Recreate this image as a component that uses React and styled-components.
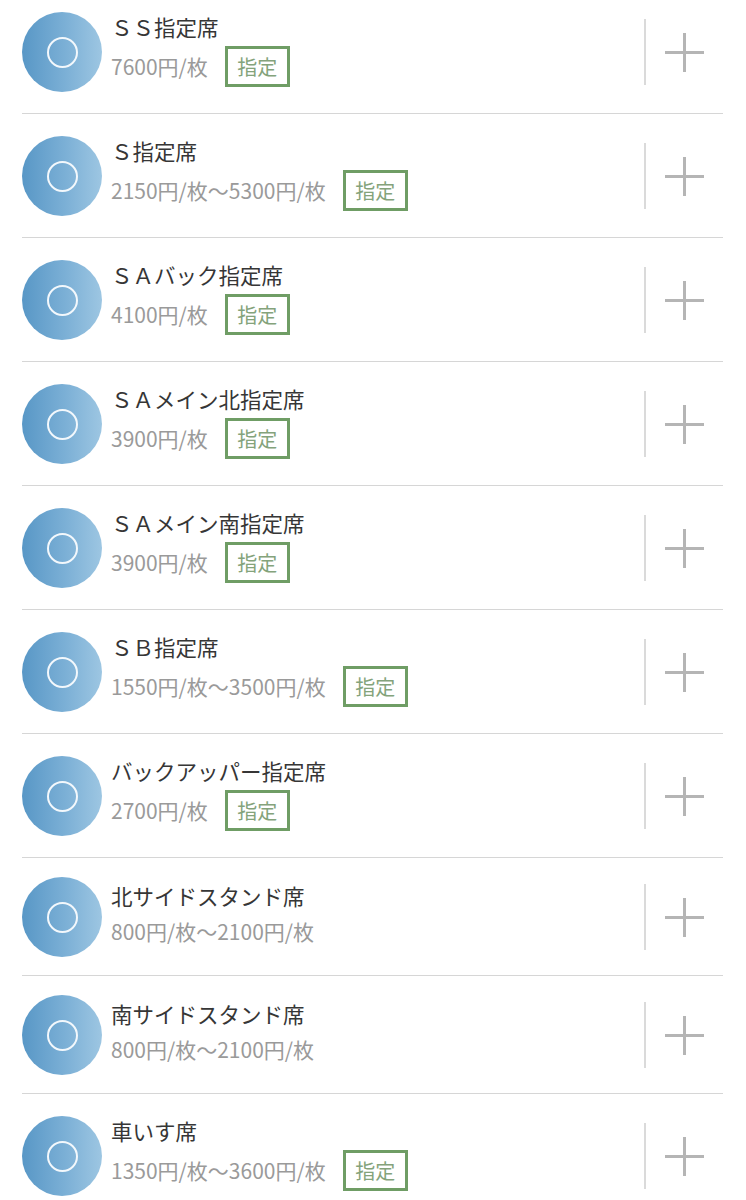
import React from "react";
import styled, { createGlobalStyle } from "styled-components";

const GlobalStyle = createGlobalStyle`
  html, body {
    margin: 0;
    padding: 0;
    background: #ffffff;
  }
  body {
    font-family: "Noto Sans CJK JP", "Noto Sans", sans-serif;
    overflow: hidden;
  }
`;

const Page = styled.div`
  width: 746px;
  height: 1200px;
  overflow: hidden;
  background: #fff;
`;

const List = styled.ul`
  list-style: none;
  margin: -10px 0 0;
  padding: 0 23px 0 22px;
`;

const Row = styled.li`
  display: flex;
  align-items: center;
  padding: 19px 0 18px;
  border-bottom: 1px solid #d6d6d6;
`;

const Avatar = styled.div`
  flex: 0 0 80px;
  width: 80px;
  height: 80px;
  border-radius: 50%;
  background: linear-gradient(90deg, #5897c6 0%, #7cb0d6 55%, #9dc6e2 100%);
  display: flex;
  align-items: center;
  justify-content: center;
`;

const Ring = styled.div`
  width: 27px;
  height: 27px;
  border-radius: 50%;
  border: 2.5px solid #f3f8fc;
`;

const Info = styled.div`
  flex: 1;
  margin-left: 9px;
  padding: 2px 0 8px;
  display: flex;
  flex-direction: column;
  gap: 3px;
`;

const Title = styled.div`
  font-size: 21.5px;
  line-height: 32px;
  color: #363636;
  white-space: nowrap;
`;

const PriceLine = styled.div`
  display: flex;
  align-items: center;
  min-height: ${(p) => (p.$tall ? "41px" : "33px")};
`;

const Price = styled.span`
  font-size: 21px;
  line-height: 33px;
  color: #9a9a9a;
  white-space: nowrap;
`;

const Badge = styled.span`
  box-sizing: border-box;
  display: inline-flex;
  align-items: center;
  justify-content: center;
  height: 41px;
  width: 65px;
  margin-left: 17px;
  border: 3px solid #6f9d65;
  color: #84a37b;
  font-size: 20px;
  line-height: 1;
`;

const Separator = styled.div`
  flex: 0 0 2px;
  width: 2px;
  height: 66px;
  background: #dadada;
`;

const AddButton = styled.button`
  flex: 0 0 77px;
  width: 77px;
  height: 66px;
  border: 0;
  padding: 0;
  background: transparent;
  display: flex;
  align-items: center;
  justify-content: center;
  cursor: pointer;
`;

const PlusIcon = () => (
  <svg width="39" height="39" viewBox="0 0 39 39" aria-hidden="true">
    <path d="M19.5 0 V39 M0 19.5 H39" stroke="#b5b5b5" strokeWidth="3" fill="none" />
  </svg>
);

const seats = [
  { name: "ＳＳ指定席", price: "7600円/枚", reserved: true },
  { name: "Ｓ指定席", price: "2150円/枚～5300円/枚", reserved: true },
  { name: "ＳＡバック指定席", price: "4100円/枚", reserved: true },
  { name: "ＳＡメイン北指定席", price: "3900円/枚", reserved: true },
  { name: "ＳＡメイン南指定席", price: "3900円/枚", reserved: true },
  { name: "ＳＢ指定席", price: "1550円/枚～3500円/枚", reserved: true },
  { name: "バックアッパー指定席", price: "2700円/枚", reserved: true },
  { name: "北サイドスタンド席", price: "800円/枚～2100円/枚", reserved: false },
  { name: "南サイドスタンド席", price: "800円/枚～2100円/枚", reserved: false },
  { name: "車いす席", price: "1350円/枚～3600円/枚", reserved: true },
];

export default function App() {
  return (
    <Page>
      <GlobalStyle />
      <List>
        {seats.map((s) => (
          <Row key={s.name}>
            <Avatar>
              <Ring />
            </Avatar>
            <Info>
              <Title>{s.name}</Title>
              <PriceLine $tall={s.reserved}>
                <Price>{s.price}</Price>
                {s.reserved && <Badge>指定</Badge>}
              </PriceLine>
            </Info>
            <Separator />
            <AddButton aria-label="追加">
              <PlusIcon />
            </AddButton>
          </Row>
        ))}
      </List>
    </Page>
  );
}
